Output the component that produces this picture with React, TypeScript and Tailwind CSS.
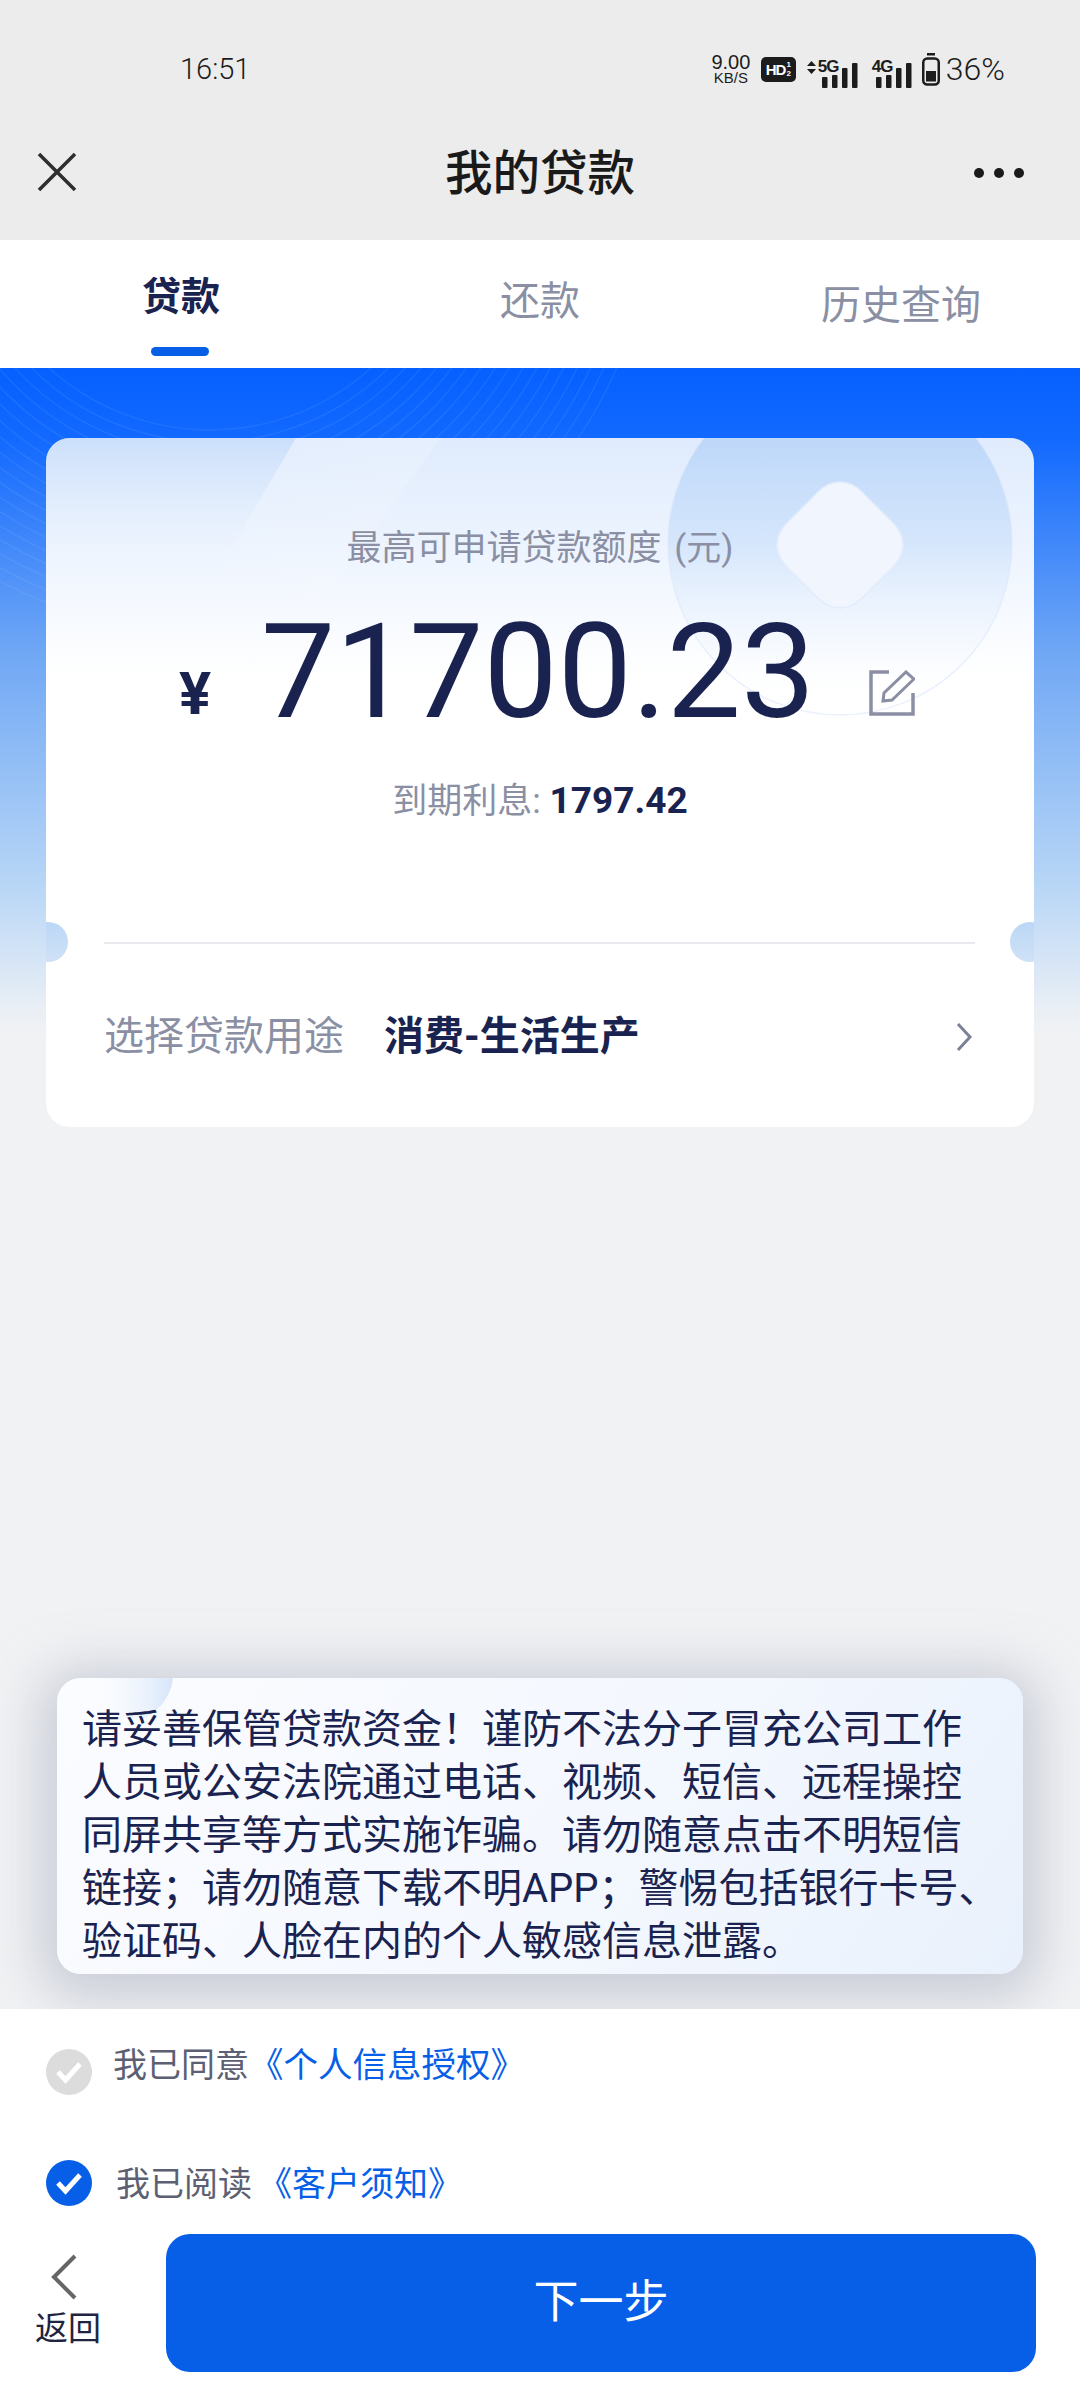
import React from 'react';

const FONT = '[font-family:Roboto,"Noto_Sans_CJK_SC",sans-serif]';
const WAVE_RADII = Array.from({ length: 18 }, (_, i) => 240 + i * 12);

const Signal: React.FC<{ label: string; arrows?: boolean }> = ({ label, arrows }) => (
  <div className="relative w-[36px] h-[26px] self-end">
    {arrows && (
      <svg className="absolute left-[-15px] top-[-1px] w-[9px] h-[13px]" viewBox="0 0 9 13" fill="#1c1c1c">
        <path d="M4.500 0 9 5H0zM0 8h9l-4.500 5z" />
      </svg>
    )}
    <span className="absolute left-[-4px] top-[-4px] text-[17px] leading-[18px] font-bold text-[#1c1c1c] [font-family:'Liberation_Sans',sans-serif] tracking-[-1px]">
      {label}
    </span>
    <svg className="absolute left-0 top-0 w-[36px] h-[26px]" viewBox="0 0 36 26" fill="#1c1c1c">
      <rect x="0" y="15" width="5.500" height="11" rx="1" />
      <rect x="10" y="13" width="5.500" height="13" rx="1" />
      <rect x="20" y="6" width="5.500" height="20" rx="1" />
      <rect x="30" y="1" width="5.500" height="25" rx="1" />
    </svg>
  </div>
);

const Check: React.FC<{ on?: boolean }> = ({ on }) => (
  <div className={`w-[46px] h-[46px] rounded-full flex items-center justify-center shrink-0 ${on ? 'bg-[#075fe8]' : 'bg-[#dcdcdc]'}`}>
    <svg className="w-[28px] h-[24px]" viewBox="0 0 28 24" fill="none" stroke="#fff" strokeWidth="5">
      <path d="M3 12l7.500 8L25 4" />
    </svg>
  </div>
);

export default function App() {
  return (
    <div className={`w-[1080px] h-[2400px] flex flex-col overflow-hidden bg-[#f1f2f4] ${FONT}`}>
      {/* status bar + title */}
      <header className="h-[240px] bg-[#ececec] shrink-0">
        <div className="h-[138px] pl-[180px] pr-[75px] flex items-start justify-between pt-[50px]">
          <span className="text-[29px] leading-[38px] text-[#1c1c1c] font-light">16:51</span>
          <div className="flex items-center h-[38px]">
            <div className="flex flex-col items-center text-[#1c1c1c] [font-family:'Liberation_Sans',sans-serif] w-[42px]">
              <span className="text-[20px] leading-[18px]">9.00</span>
              <span className="text-[15px] leading-[14px]">KB/S</span>
            </div>
            <div className="ml-[9px] w-[35px] h-[25px] rounded-[5px] bg-[#1c1c1c] text-white flex items-center justify-center [font-family:'Liberation_Sans',sans-serif]">
              <span className="text-[15px] leading-[25px] font-bold tracking-[-1px]">HD</span>
              <span className="flex flex-col ml-[1px] text-[8px] leading-[9px] font-bold">
                <span>1</span>
                <span>2</span>
              </span>
            </div>
            <div className="w-[26px]" />
            <Signal label="5G" arrows />
            <div className="w-[18px]" />
            <Signal label="4G" />
            <svg className="w-[18px] h-[33px] ml-[10px]" viewBox="0 0 18 33" fill="none">
              <rect x="1.250" y="5.500" width="15.500" height="26" rx="4" stroke="#1c1c1c" strokeWidth="2.500" />
              <rect x="5" y="0" width="8" height="2.500" fill="#1c1c1c" />
              <rect x="4" y="18" width="10" height="10.500" fill="#1c1c1c" />
            </svg>
            <span className="ml-[6px] text-[32px] leading-[38px] text-[#1c1c1c] font-light">36%</span>
          </div>
        </div>
        <div className="relative h-[70px] flex items-center justify-center">
          <svg className="absolute left-[37px] top-[14px] w-[40px] h-[40px]" viewBox="0 0 40 40" stroke="#2e2e2e" strokeWidth="3.500">
            <path d="M2 2l36 36M38 2L2 38" />
          </svg>
          <h1 className="text-[47.500px] leading-[70px] text-[#1a1a1a] font-medium translate-y-[1px]">我的贷款</h1>
          <div className="absolute right-[56px] top-[30px] flex gap-[10px]">
            <span className="w-[10px] h-[10px] rounded-full bg-[#1a1a1a]" />
            <span className="w-[10px] h-[10px] rounded-full bg-[#1a1a1a]" />
            <span className="w-[10px] h-[10px] rounded-full bg-[#1a1a1a]" />
          </div>
        </div>
      </header>

      {/* tabs */}
      <nav className="h-[128px] bg-white shrink-0 flex">
        <div className="w-[360px] relative pt-[35px] pl-[142px]">
          <span className="block text-[39px] leading-[44px] font-bold text-[#1a2350]">贷款</span>
          <div className="absolute left-[151px] top-[107px] w-[58px] h-[9px] rounded-full bg-[#075fe8]" />
        </div>
        <div className="w-[360px] pt-[39px] pl-[140px]">
          <span className="block text-[40px] leading-[46px] text-[#8a8fa3]">还款</span>
        </div>
        <div className="w-[360px] pt-[43px] pl-[101px]">
          <span className="block text-[40px] leading-[46px] text-[#8a8fa3]">历史查询</span>
        </div>
      </nav>

      {/* body */}
      <main className="flex-1 flex flex-col bg-[linear-gradient(180deg,#0560ff_0px,#1269ff_70px,#6fa7f5_282px,#b6d5f6_512px,#d6e5f6_592px,#eaeff5_642px,#f1f2f4_670px)] relative">
        <svg className="absolute left-0 top-0 w-[1080px] h-[300px]" viewBox="0 0 1080 300" fill="none" stroke="#ffffff" strokeOpacity="0.07" strokeWidth="1.500">
          {WAVE_RADII.map((r) => (
            <circle key={r} cx="210" cy="-178" r={r} />
          ))}
        </svg>

        <section className="relative mx-[46px] mt-[70px] h-[689px] rounded-[24px] overflow-hidden bg-[linear-gradient(180deg,#dfebfd_0px,#edf4fe_110px,#ffffff_240px)] flex flex-col">
          {/* card background art */}
          <svg className="absolute left-0 top-0 w-[990px] h-[300px] pointer-events-none" viewBox="0 0 990 300" fill="none">
            <defs>
              <linearGradient id="coin" x1="0" y1="0" x2="0" y2="1">
                <stop offset="0" stopColor="#a9cbf7" stopOpacity="0.9" />
                <stop offset="0.5" stopColor="#c9dffb" stopOpacity="0.65" />
                <stop offset="1" stopColor="#ffffff" stopOpacity="0" />
              </linearGradient>
              <linearGradient id="patch" x1="0" y1="0" x2="0" y2="1">
                <stop offset="0" stopColor="#c5dbfa" stopOpacity="0.75" />
                <stop offset="1" stopColor="#ffffff" stopOpacity="0" />
              </linearGradient>
              <linearGradient id="patch2" x1="1" y1="0" x2="0" y2="1">
                <stop offset="0" stopColor="#ffffff" stopOpacity="0.2" />
                <stop offset="1" stopColor="#ffffff" stopOpacity="0" />
              </linearGradient>
            </defs>
            <path d="M0 0H250L150 170H0z" fill="url(#patch)" />
            <path d="M250 0H395L270 170H150z" fill="url(#patch2)" />
            <circle cx="794" cy="105" r="172" fill="url(#coin)" stroke="#dce8fa" strokeOpacity="0.6" strokeWidth="1.500" />
            <path d="M794 44c9 0 16 4 22 10l31 31c7 7 10 14 10 22s-3 15-10 22l-31 31c-6 6-13 10-22 10s-16-4-22-10l-31-31c-7-7-10-14-10-22s3-15 10-22l31-31c6-6 13-10 22-10z" fill="#f1f6fe" stroke="#e2ecfb" strokeWidth="1.500" />
          </svg>
          <p className="relative mt-[91px] text-center text-[35px] leading-[40px] text-[#8a8fa3]">
            最高可申请贷款额度 <span className="ml-[4px]">(元)</span>
          </p>
          <div className="relative mt-[32px] h-[130px]">
            <span className="absolute left-[133px] top-[58px] text-[60px] leading-[70px] font-bold text-[#1a2350]">¥</span>
            <span className="absolute left-[215px] top-[5px] text-[132px] leading-[132px] text-[#1a2350]">71700.23</span>
            <svg className="absolute left-[823px] top-[69px] w-[46px] h-[46px]" viewBox="0 0 46 46" fill="none" stroke="#8a8fa3" strokeWidth="3.500">
              <path d="M20 2H2v42h42V23" />
              <path d="M14 31l1-8L37 2l8 7-22 21z" strokeWidth="3" />
            </svg>
          </div>
          <p className="relative mt-[50px] text-center text-[35px] leading-[40px] text-[#8a8fa3]">
            到期利息: <span className="text-[37px] font-bold text-[#1a2350]">1797.42</span>
          </p>
          {/* ticket notches */}
          <div className="absolute top-[484px] left-[-18px] w-[40px] h-[40px] rounded-full bg-[linear-gradient(180deg,#bbd7f6,#cfe1f6)]" />
          <div className="absolute top-[484px] right-[-16px] w-[40px] h-[40px] rounded-full bg-[linear-gradient(180deg,#bbd7f6,#cfe1f6)]" />
          <div className="absolute left-[58px] right-[59px] top-[504px] h-[2px] bg-[#e8eaee]" />
          <div className="absolute left-[58px] right-[61px] top-[564px] h-[70px] flex items-center">
            <span className="text-[40px] text-[#8a8fa3] w-[280px]">选择贷款用途</span>
            <span className="text-[40px] font-bold text-[#1a2350]">消费-生活生产</span>
            <svg className="ml-auto w-[17px] h-[30px]" viewBox="0 0 17 30" fill="none" stroke="#7d8198" strokeWidth="3">
              <path d="M2 2l12 13L2 28" />
            </svg>
          </div>
        </section>

        <div className="flex-1" />

        <section className="relative mx-[57px] h-[296px] rounded-[24px] overflow-hidden shadow-[0_8px_50px_18px_rgba(165,172,190,0.5)]">
          <div className="h-full px-[25px] pt-[25px] bg-[linear-gradient(125deg,#fbfcff,#f3f7fe_60%,#e9f1fc)] text-[40px] leading-[53px] text-[#1a2350] whitespace-nowrap">
            <svg className="absolute left-[30px] top-0 w-[90px] h-[40px]" viewBox="0 0 90 40" fill="none">
              <defs>
                <linearGradient id="corner" x1="0" y1="0" x2="1" y2="0">
                  <stop offset="0" stopColor="#ffffff" stopOpacity="0" />
                  <stop offset="1" stopColor="#d5e5f9" />
                </linearGradient>
              </defs>
              <path d="M0 0H86C84 16 76 30 58 40H0z" fill="url(#corner)" />
            </svg>
            <div className="relative">
              请妥善保管贷款资金！谨防不法分子冒充公司工作
              <br />
              人员或公安法院通过电话、视频、短信、远程操控
              <br />
              同屏共享等方式实施诈骗。请勿随意点击不明短信
              <br />
              链接；请勿随意下载不明APP；警惕包括银行卡号、
              <br />
              验证码、人脸在内的个人敏感信息泄露。
            </div>
          </div>
        </section>
        <div className="h-[35px] shrink-0" />

        <footer className="relative h-[391px] bg-white shrink-0">
          <div className="absolute left-[46px] top-[40px] flex items-start">
            <Check />
            <span className="ml-[21px] -mt-[6px] text-[34px] leading-[44px] text-[#5c6072]">我已同意</span>
            <span className="-mt-[6px] text-[34.500px] leading-[44px] text-[#075fe8]">《个人信息授权》</span>
          </div>
          <div className="absolute left-[46px] top-[151px] flex items-center">
            <Check on />
            <span className="ml-[24px] mt-[1px] text-[34px] leading-[44px] text-[#5c6072]">我已阅读</span>
            <span className="ml-[6px] mt-[1px] text-[34px] leading-[44px] text-[#075fe8]">《客户须知》</span>
          </div>
          <div className="absolute left-0 right-[44px] top-[225px] flex items-start">
            <div className="w-[166px] flex flex-col pl-[35px] pt-[20px]">
              <svg className="ml-[14px] w-[30px] h-[46px]" viewBox="0 0 30 46" fill="none" stroke="#666" strokeWidth="4">
                <path d="M26 2L5 23l21 21" />
              </svg>
              <span className="mt-[9px] text-[33px] leading-[40px] text-[#1f2440]">返回</span>
            </div>
            <button className="flex-1 h-[138px] rounded-[24px] bg-[#075fe8] text-white text-[45px] leading-[138px]">下一步</button>
          </div>
        </footer>
      </main>
    </div>
  );
}
